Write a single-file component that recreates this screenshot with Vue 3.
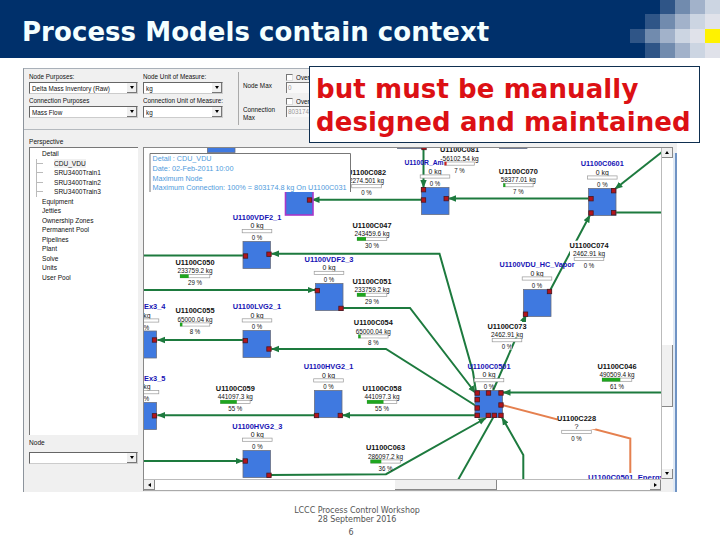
<template>
  <div class="slide">

    <!-- ========== HEADER ========== -->
    <header class="header">
      <h1 class="header-title">Process Models contain context</h1>
      <div class="mosaic">
        <span v-for="(c, i) in mosaic" :key="i" :class="['tile', 'tile-' + c]"></span>
      </div>
    </header>

    <!-- ========== APPLICATION WINDOW ========== -->
    <main class="window">

      <section class="toolbar">
        <div v-for="col in filters" :key="col.key" :class="['filter-col', col.key]">
          <template v-for="f in col.fields" :key="f.label">
            <label class="lbl"><span class="narrow">{{ f.label }}</span></label>
            <div class="select">
              <span class="select-val"><span class="narrow">{{ f.value }}</span></span>
              <i class="select-btn"></i>
            </div>
          </template>
        </div>
        <div class="limits">
          <div v-for="l in limits" :key="l.value" class="limit">
            <div class="limit-lbl">
              <div v-for="line in l.lines" :key="line"><span class="narrow">{{ line }}</span></div>
            </div>
            <div class="limit-fields">
              <div class="check"><i class="check-box"></i><span class="narrow">Over</span></div>
              <div class="limit-input"><span class="narrow">{{ l.value }}</span></div>
            </div>
          </div>
        </div>
      </section>

      <div class="body">
        <!-- Perspective tree -->
        <aside class="side">
          <div class="side-title"><span class="narrow">Perspective</span></div>
          <ul class="tree">
            <li v-for="t in tree" :key="t.name" :class="{ child: t.child, picked: t.picked }">
              <span class="narrow">{{ t.name }}</span>
            </li>
          </ul>
          <div class="side-title node-title"><span class="narrow">Node</span></div>
          <div class="select"><span class="select-val"></span><i class="select-btn"></i></div>
        </aside>

        <!-- Flow diagram -->
        <div class="canvas">
          <svg class="diagram" viewBox="144 148 517 331" width="517" height="331">
            <defs>
              <marker id="arrow" markerUnits="userSpaceOnUse" markerWidth="9" markerHeight="8" refX="7.5" refY="4" orient="auto-start-reverse">
                <path d="M0 0.8 L8 4 L0 7.2 Z" fill="#1d7a3e" />
              </marker>
            </defs>

            <polyline
              v-for="(l, i) in links"
              :key="'l' + i"
              :points="l.pts"
              :class="['link', { energy: l.energy }]"
              :marker-end="l.arrow ? 'url(#arrow)' : null"
            />

            <g v-for="n in nodes" :key="'n' + n.x + '-' + n.y">
              <rect :x="n.x + 0.5" :y="n.y + 0.5" width="27.5" height="27" :class="['node', { selected: n.selected }]" />
              <rect v-for="(p, i) in n.ports" :key="i" :x="p[0] - 2.2" :y="p[1] - 2.2" width="4.4" height="4.4" class="port" />
            </g>

            <g v-for="t in tags" :key="t.name">
              <rect v-if="!t.node" :x="t.x - 19" :y="t.y - 7" width="38" height="15.5" fill="#fff" />
              <text :x="t.x + (t.dx || 0)" :y="t.y" :textLength="t.w || 39" lengthAdjust="spacingAndGlyphs" :class="['tag-name', { blue: t.node }]">{{ t.name }}</text>
              <text :x="t.x" :y="t.y + 8.3" :textLength="valueWidth(t.value)" lengthAdjust="spacingAndGlyphs" class="tag-val">{{ t.value }}</text>
              <rect :x="t.x - 14.8" :y="t.y + 9.6" width="29.6" height="3.2" class="bar" />
              <rect v-if="t.pct" :x="t.x - 15" :y="t.y + 9.4" :width="0.3 * t.pct" height="3.6" :fill="t.neg ? '#c22' : '#1fa51f'" />
              <rect v-if="!t.node" :x="t.x - 5" :y="t.y + 13.5" width="10" height="7" fill="#fff" />
              <text :x="t.x" :y="t.y + 20.2" :textLength="t.pct > 9 ? 14 : 10.5" lengthAdjust="spacingAndGlyphs" class="tag-val">{{ pctText(t) }}</text>
            </g>
            <text x="588" y="480" textLength="76" lengthAdjust="spacingAndGlyphs" class="tag-name blue start">U1100C0501_Energy</text>

            <!-- Info box over the selected node -->
            <rect x="150" y="153.5" width="200.5" height="38.5" fill="#fff" />
            <path d="M150 192 V153.5 H350.5 V192" class="info-edge" />
            <text
              v-for="(line, i) in info"
              :key="line.text"
              x="152.5"
              :y="161.3 + i * 9.6"
              :textLength="line.w"
              lengthAdjust="spacingAndGlyphs"
              class="info"
            >{{ line.text }}</text>
          </svg>

          <div class="vscroll">
            <i class="sb-btn up"></i>
            <i class="v-thumb"></i>
            <i class="sb-btn down"></i>
          </div>
          <div class="hscroll">
            <i class="sb-btn left"></i>
            <i class="h-thumb"></i>
            <i class="sb-btn right"></i>
          </div>
          <div class="corner"></div>
        </div>
        <div class="frame-edge"></div>
      </div>
    </main>

    <!-- Callout -->
    <div class="callout">but must be manually<br>designed and maintained</div>

    <footer class="footer">
      <div>LCCC Process Control Workshop</div>
      <div>28 September 2016</div>
      <div class="page">6</div>
    </footer>
  </div>
</template>

<script setup>
// 0 = header blue, 1-5 = lighter steps, y = yellow; one string per row
const mosaic = [...'001234', ...'012345', ...'12345y', ...'012345']

const filters = [
  {
    key: 'purposes',
    fields: [
      { label: 'Node Purposes:', value: 'Delta Mass Inventory (Raw)' },
      { label: 'Connection Purposes', value: 'Mass Flow' },
    ],
  },
  {
    key: 'units',
    fields: [
      { label: 'Node Unit of Measure:', value: 'kg' },
      { label: 'Connection Unit of Measure:', value: 'kg' },
    ],
  },
]

const limits = [
  { lines: ['Node Max'], value: '0' },
  { lines: ['Connection', 'Max'], value: '803174' },
]

const tree = [
  { name: 'Detail' },
  { name: 'CDU_VDU', child: true, picked: true },
  { name: 'SRU3400Train1', child: true },
  { name: 'SRU3400Train2', child: true },
  { name: 'SRU3400Train3', child: true },
  { name: 'Equipment' },
  { name: 'Jetties' },
  { name: 'Ownership Zones' },
  { name: 'Permanent Pool' },
  { name: 'Pipelines' },
  { name: 'Plant' },
  { name: 'Solve' },
  { name: 'Units' },
  { name: 'User Pool' },
]

const info = [
  { text: 'Detail : CDU_VDU', w: 59 },
  { text: 'Date: 02-Feb-2011 10:00', w: 81 },
  { text: 'Maximum Node', w: 50 },
  { text: 'Maximum Connection: 100% = 803174.8 kg On U1100C031', w: 194 },
]

const links = [
  { pts: '421,199.8 312,199.8', arrow: true },
  { pts: '588,198.5 448.5,198.5', arrow: true },
  { pts: '423.5,148 423.5,187.5', arrow: true },
  { pts: '662,152 615,189', arrow: true },
  { pts: '615,212.5 662,212.5' },
  { pts: '549.5,291.5 590,215', arrow: true },
  { pts: '476,392 473,372 439.5,253.7 271.5,253.7', arrow: true },
  { pts: '143,255.5 245,255.5' },
  { pts: '143,290 315,290', arrow: true },
  { pts: '341,308 410,308 475.5,393', arrow: true },
  { pts: '477,406.5 386,349 271.5,349', arrow: true },
  { pts: '245,340 157.5,340', arrow: true },
  { pts: '316,415.3 157.5,415.3', arrow: true },
  { pts: '477,415.3 342.5,415.3', arrow: true },
  { pts: '143,461 243,461', arrow: true },
  { pts: '269,475 386,474.2 486,418', arrow: true },
  { pts: '494,416 458,480' },
  { pts: '523.3,480 523.3,455 502,417.5', arrow: true },
  { pts: '492,393 526,315', arrow: true },
  { pts: '662,392.5 503,392.5', arrow: true },
  { pts: '502,405 630.3,438.5 630.3,473', energy: true },
]

const nodes = [
  { x: 207, y: 125, ports: [] },
  { x: 397, y: 121, ports: [[424, 147.5]] },
  { x: 499, y: 121, ports: [] },
  { x: 285, y: 187.5, selected: true, ports: [[309.5, 200]] },
  { x: 421, y: 187, ports: [[423.5, 189.7], [423.5, 200], [446.2, 198.6]] },
  { x: 588, y: 188, ports: [[591, 198.7], [591, 213], [613.6, 190.7], [613.6, 212.7]] },
  { x: 242.5, y: 241, ports: [[245.5, 256], [269, 254.2]] },
  { x: 315, y: 283, ports: [[317.3, 290.6], [341, 308.4]] },
  { x: 242.5, y: 330, ports: [[245.3, 340.6], [269, 349]] },
  { x: 128.5, y: 330.5, ports: [[154.5, 340]] },
  { x: 128.5, y: 402, ports: [[154.5, 415.8]] },
  { x: 314, y: 390, ports: [[316.5, 415.5], [340.3, 415.5]] },
  { x: 242.5, y: 450, ports: [[245.3, 461], [269, 475.3]] },
  { x: 523, y: 289, ports: [[549.5, 291.5], [525.5, 314.2]] },
  {
    x: 474.5,
    y: 390,
    ports: [
      [477.2, 393], [488.5, 393], [501, 393],
      [477.2, 399.7], [477.2, 408], [501, 405],
      [477.2, 415.4], [488.3, 415.4], [494.3, 415.4], [501, 415.4],
    ],
  },
]

const tags = [
  { name: 'U1100C082', x: 366.5, y: 175, value: '2274.501 kg' },
  { name: 'U1100C081', x: 459.5, y: 152.4, value: '-56102.54 kg', pct: 7, neg: true },
  { name: 'U1100R_Am', x: 435, y: 165.3, dx: -11, value: '0 kg', node: true },
  { name: 'U1100C070', x: 518.3, y: 174, value: '58377.01 kg', pct: 7 },
  { name: 'U1100C0601', x: 602.3, y: 166.3, w: 43, value: '0 kg', node: true },
  { name: 'U1100C074', x: 589, y: 247.7, value: '2462.91 kg' },
  { name: 'U1100C047', x: 372, y: 227.7, value: '243459.6 kg', pct: 30 },
  { name: 'U1100VDF2_1', x: 257, y: 220, w: 48.5, value: '0 kg', node: true },
  { name: 'U1100VDF2_3', x: 329, y: 261.7, w: 49, value: '0 kg', node: true },
  { name: 'U1100VDU_HC_Vapor', x: 537, y: 267.3, w: 75, value: '0 kg', node: true },
  { name: 'U1100C050', x: 195, y: 265, value: '233759.2 kg', pct: 29 },
  { name: 'U1100C051', x: 372, y: 283.6, value: '233759.2 kg', pct: 29 },
  { name: 'U1100Ex3_4', x: 144, y: 309.3, w: 43, value: '0 kg', node: true },
  { name: 'U1100C055', x: 195, y: 313.3, value: '65000.04 kg', pct: 8 },
  { name: 'U1100LVG2_1', x: 257, y: 309.2, w: 48.5, value: '0 kg', node: true },
  { name: 'U1100C054', x: 373.3, y: 325.2, value: '65000.04 kg', pct: 8 },
  { name: 'U1100C073', x: 507, y: 329, value: '2462.91 kg' },
  { name: 'U1100C0501', x: 489, y: 369, w: 43, value: '0 kg', node: true },
  { name: 'U1100C046', x: 617, y: 368.5, value: '490509.4 kg', pct: 61 },
  { name: 'U1100Ex3_5', x: 144, y: 381, w: 43, value: '0 kg', node: true },
  { name: 'U1100HVG2_1', x: 328.5, y: 369.2, w: 49.5, value: '0 kg', node: true },
  { name: 'U1100C059', x: 235.3, y: 390.7, value: '441097.3 kg', pct: 55 },
  { name: 'U1100C058', x: 382, y: 390.7, value: '441097.3 kg', pct: 55 },
  { name: 'U1100C228', x: 576.5, y: 420.7, value: '?' },
  { name: 'U1100HVG2_3', x: 257.3, y: 428.5, w: 50, value: '0 kg', node: true },
  { name: 'U1100C063', x: 385.5, y: 450.3, value: '286097.2 kg', pct: 36 },
]

function valueWidth(v) {
  if (v.length < 3) return 4
  return v.length < 5 ? 13 : v.length * 3.2
}

function pctText(t) {
  return `${t.pct || 0} %`
}
</script>

<style>
body {
  margin: 0;
  background: #fff;
}
</style>

<style scoped>
.slide {
  position: relative;
  width: 720px;
  height: 540px;
  overflow: hidden;
  background: #fff;
  font-family: "Liberation Sans", Arial, sans-serif;
}

/* ─── Header ─── */
.header {
  display: flex;
  justify-content: space-between;
  height: 58px;
  background: #00306b;
}

.header-title {
  margin: 0;
  padding: 15px 0 0 22px;
  font-family: "DejaVu Sans", Verdana, sans-serif;
  font-size: 26px;
  line-height: 34px;
  font-weight: 700;
  letter-spacing: 0.06px;
  color: #f4ffff;
  white-space: nowrap;
}

.mosaic {
  display: grid;
  grid-template-columns: repeat(6, 15px);
  grid-template-rows: 14px 15px 14px 15px;
}

.tile-1 { background: #2f5587; }
.tile-2 { background: #718bae; }
.tile-3 { background: #a2b2ca; }
.tile-4 { background: #ccd5e2; }
.tile-5 { background: #e0e2ea; }
.tile-y { background: #fff200; }

/* ─── Window ─── */
.window {
  box-sizing: border-box;
  width: 654px;
  height: 424px;
  margin: 10px 0 0 23px;
  border-top: 1px solid #a9b0b8;
  border-left: 1px solid #8d949c;
  background: #f0f0f0;
  font-size: 8px;
  color: #111;
}

/* the form font is a condensed bitmap-like sans */
.narrow {
  display: inline-block;
  transform: scaleX(0.79);
  transform-origin: 0 50%;
  white-space: nowrap;
}

.toolbar {
  display: flex;
  box-sizing: border-box;
  height: 61px;
  padding: 3px 0 0 5px;
  border-bottom: 1px solid #b4b9be;
}

.filter-col { margin-right: 5px; }
.purposes { width: 109px; }
.units { width: 80px; }

.lbl {
  display: block;
  height: 10px;
  line-height: 10px;
  white-space: nowrap;
}

.select {
  display: flex;
  box-sizing: border-box;
  height: 12px;
  margin-bottom: 2px;
  border: 1px solid #ccc;
  border-top-color: #666;
  border-left-color: #666;
  background: #fff;
}

.select-val {
  flex: 1;
  width: 0;
  padding-left: 2px;
  line-height: 11px;
  white-space: nowrap;
}

.select-btn {
  display: flex;
  align-items: center;
  justify-content: center;
  flex-shrink: 0;
  width: 9px;
  background: #f0f0f0;
  border-right: 1px solid #777;
  border-bottom: 1px solid #777;
}

.select-btn::before {
  content: '';
  border: 2.5px solid transparent;
  border-top: 3px solid #000;
  border-bottom: 0;
}

.limits {
  height: 53px;
  margin-left: 10px;
  padding-left: 4px;
  border-left: 1px solid #aaa;
}

.limit {
  display: flex;
  height: 24px;
}

.limit-lbl {
  width: 36px;
  margin-right: 7px;
  padding-top: 10px;
  line-height: 8px;
}

.limit-fields { width: 24px; }

.check {
  display: flex;
  align-items: center;
  gap: 3px;
  height: 10px;
}

.check .narrow { width: 13px; }

.check-box {
  flex-shrink: 0;
  width: 5px;
  height: 5px;
  border: 1px solid #ddd;
  border-top-color: #777;
  border-left-color: #777;
  background: #fff;
}

.limit-input {
  height: 10px;
  padding-left: 1px;
  border-top: 1px solid #777;
  border-left: 1px solid #777;
  background: #f8f8f8;
  line-height: 10px;
  color: #999;
}

.body {
  display: flex;
  height: 362px;
}

/* ─── Left panel ─── */
.side {
  width: 109px;
  padding: 7px 5px 0 5px;
}

.side-title {
  height: 10px;
  line-height: 10px;
}

.side-title .narrow { transform: scaleX(0.82); }

.node-title { margin: 3px 0 4px; }

.tree {
  box-sizing: border-box;
  height: 288px;
  margin: 0;
  padding: 1px 0 0 12px;
  list-style: none;
  border-top: 1px solid #777;
  border-left: 1px solid #777;
  background: #fff;
}

.tree li {
  height: 9.5px;
  line-height: 9.5px;
}

.tree .narrow { transform: scaleX(0.82); }

.tree .child {
  display: flex;
  align-items: center;
  box-sizing: border-box;
  margin-left: -6px;
  border-left: 1px solid #bbb;
}

.tree .child::before {
  content: '';
  width: 6px;
  margin-right: 11px;
  border-top: 1px solid #bbb;
}

.picked span { background: #f0f0f0; }

/* ─── Canvas ─── */
.canvas {
  display: grid;
  grid-template-columns: 517px 12px;
  grid-template-rows: 331px 12px;
  width: 529px;
  height: 343px;
  margin-top: 17px;
  border-top: 1px solid #888;
  border-left: 1px solid #888;
  background: #fff;
}

.diagram { display: block; }

.link {
  fill: none;
  stroke: #1d7a3e;
  stroke-width: 2;
}

.energy { stroke: #e5804f; }

.node {
  fill: #3f79e0;
  stroke: #6a6f80;
  stroke-width: 0.8;
}

.selected {
  stroke: #a838c8;
  stroke-width: 1.6;
}

.port {
  fill: #b3141c;
  stroke: #4a1820;
  stroke-width: 0.8;
}

.tag-name {
  font-family: "Liberation Sans", Arial, sans-serif;
  font-size: 7.8px;
  font-weight: 700;
  fill: #111;
  text-anchor: middle;
}

.blue { fill: #1512b4; }
.start { text-anchor: start; }

.tag-val {
  font-family: "Liberation Sans", Arial, sans-serif;
  font-size: 8px;
  fill: #111;
  text-anchor: middle;
}

.bar {
  fill: #fff;
  stroke: #999;
  stroke-width: 0.7;
}

.info {
  font-family: "Liberation Sans", Arial, sans-serif;
  font-size: 8px;
  fill: #4f9bdc;
}

.info-edge {
  fill: none;
  stroke: #777;
  stroke-width: 1;
}

/* ─── Scrollbars ─── */
.vscroll {
  display: flex;
  flex-direction: column;
  box-sizing: border-box;
  border-left: 1px solid #bbb;
  background: #fff;
}

.hscroll {
  display: flex;
  box-sizing: border-box;
  border-top: 1px solid #bbb;
  border-bottom: 1px solid #aaa;
  background: #fff;
}

.sb-btn {
  display: flex;
  align-items: center;
  justify-content: center;
  box-sizing: border-box;
  width: 11px;
  height: 10px;
  background: #f0f0f0;
  border-right: 1px solid #888;
  border-bottom: 1px solid #888;
}

.sb-btn::before {
  content: '';
  border: 2px solid transparent;
}

.up::before { border-bottom: 3px solid #000; border-top: 0; }
.down::before { border-top: 3px solid #000; border-bottom: 0; }
.left::before { border-right: 3px solid #000; border-left: 0; }
.right::before { border-left: 3px solid #000; border-right: 0; }

.down { margin-top: auto; }
.right { margin-left: auto; }

.v-thumb {
  height: 62px;
  margin-top: 187px;
  background: #f0f0f0;
  border-right: 1px solid #888;
  border-bottom: 1px solid #888;
  box-sizing: border-box;
}

.h-thumb {
  width: 102px;
  margin-left: 240px;
  background: #f0f0f0;
  border-right: 1px solid #888;
  border-bottom: 1px solid #888;
  box-sizing: border-box;
}

.corner { background: #f0f0f0; }

.frame-edge {
  box-sizing: border-box;
  width: 4px;
  margin-top: 23px;
  background: #dfe9f5;
  border-right: 2px solid #6f93c4;
}

/* ─── Callout ─── */
.callout {
  position: absolute;
  left: 309px;
  top: 66px;
  box-sizing: border-box;
  width: 391px;
  height: 77px;
  padding: 6px 0 0 6px;
  border: 1px solid #0f2f50;
  background: #fff;
  font-family: "DejaVu Sans", Verdana, sans-serif;
  font-size: 26px;
  font-weight: 700;
  line-height: 33px;
  letter-spacing: 0.1px;
  color: #dc1014;
  white-space: nowrap;
}

/* ─── Footer ─── */
.footer {
  width: 714px;
  padding-top: 14px;
  font-family: "DejaVu Sans", sans-serif;
  font-size: 8px;
  line-height: 9px;
  letter-spacing: -0.07px;
  text-align: center;
  color: #555;
}

.page {
  width: 702px;
  margin-top: 4px;
}
</style>
